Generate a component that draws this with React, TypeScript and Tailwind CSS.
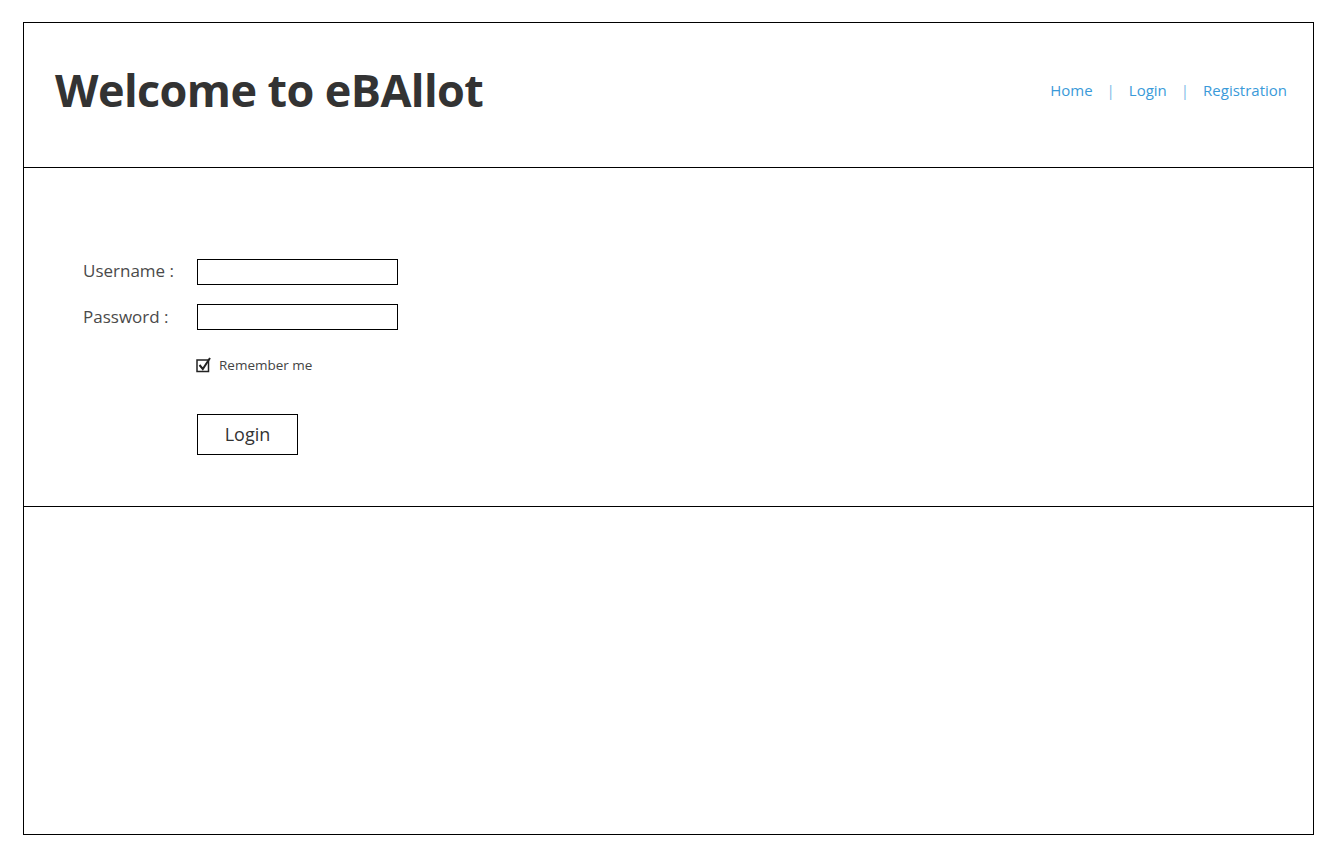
export default function App() {
  const font = { fontFamily: '"Open Sans", "Liberation Sans", sans-serif' };
  return (
    <div className="bg-white w-[1339px] h-[856px] pt-[22px] pl-[23px]" style={font}>
      <div className="w-[1291px] h-[813px] border border-black flex flex-col">
        {/* Header */}
        <header className="h-[145px] border-b border-black flex items-center justify-between pl-[31px] pr-[26px] shrink-0">
          <h1 className="text-[45px] font-bold text-[#333] tracking-[-0.6px] leading-none pb-[12px]">
            Welcome to eBAllot
          </h1>
          <nav className="flex items-center text-[15px] text-[#3a9ad9] pb-[10px]">
            <a href="#">Home</a>
            <span className="px-[14px] text-[#7db9e6]">|</span>
            <a href="#">Login</a>
            <span className="px-[14px] text-[#7db9e6]">|</span>
            <a href="#">Registration</a>
          </nav>
        </header>

        {/* Login form */}
        <section className="h-[339px] border-b border-black shrink-0 pt-[91px] pl-[59px]">
          <div className="flex items-center h-[26px]">
            <label className="w-[114px] text-[17px] text-[#4a4a4a] pb-[2px]">Username :</label>
            <input className="w-[201px] h-[26px] border border-black outline-none" type="text" />
          </div>
          <div className="flex items-center h-[26px] mt-[19px]">
            <label className="w-[114px] text-[17px] text-[#4a4a4a]">Password :</label>
            <input className="w-[201px] h-[26px] border border-black outline-none" type="password" />
          </div>
          <div className="flex items-center mt-[25px] ml-[113px] gap-[7px]">
            <svg width="16" height="16" viewBox="0 0 16 16" fill="none">
              <rect x="1" y="3" width="11.5" height="11.5" stroke="#222" strokeWidth="1.5" />
              <path d="M3.5 8 L6.8 12 L14 1" stroke="#222" strokeWidth="2" />
            </svg>
            <span className="text-[13.5px] text-[#444]">Remember me</span>
          </div>
          <button className="mt-[39px] ml-[114px] w-[101px] h-[41px] border border-black text-[18px] text-[#333]">
            Login
          </button>
        </section>

        {/* Footer */}
        <footer className="flex-1" />
      </div>
    </div>
  );
}
